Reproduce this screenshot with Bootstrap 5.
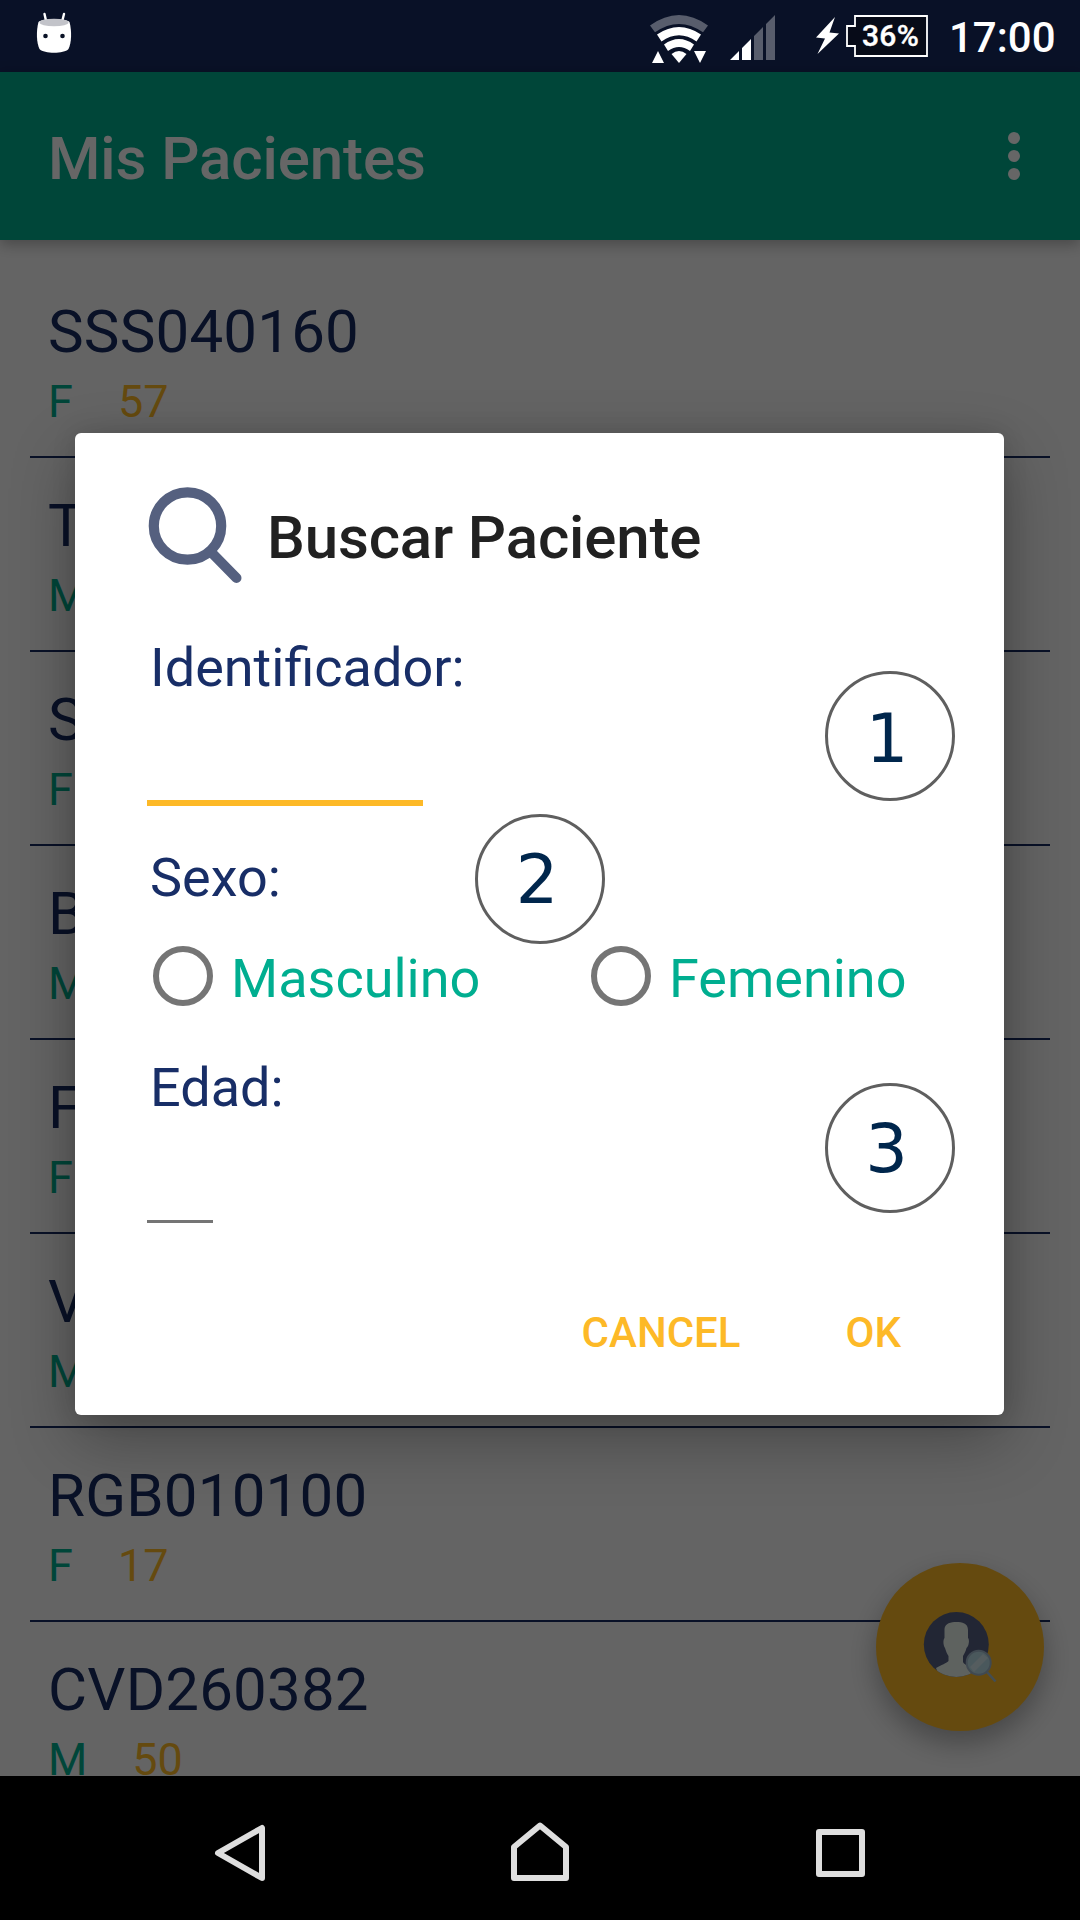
<!DOCTYPE html>
<html lang="es">
<head>
<meta charset="utf-8">
<meta name="viewport" content="width=device-width, initial-scale=1">
<title>Mis Pacientes</title>
<link href="https://cdn.jsdelivr.net/npm/bootstrap@5.3.0/dist/css/bootstrap.min.css" rel="stylesheet">
<style>
  :root { --navy:#182c61; --teal:#00ae90; --amber:#fdb927; }
  body { font-family: Roboto, "Liberation Sans", sans-serif; width:1080px; height:1920px; overflow:hidden; background:#000; }
  svg { display:block; flex:none; }
  .phone { width:1080px; height:1920px; }
  .screen { height:1776px; background:#fafafa; }
  .status { height:72px; background:var(--navy); }
  .status-icons { height:72px; z-index:5; color:#fff; padding:0 24px 0 36px; }
  .signal { margin-left:22px; }
  .bolt { margin-left:41px; }
  .clock { font-size:42px; line-height:48px; font-weight:500; width:107px; margin-left:21px; padding-top:3px; }
  .battery { width:82px; height:42px; margin-left:7px; }
  .battery-text { font-size:30px; line-height:42px; font-weight:500; left:16px; top:0; letter-spacing:.3px; -webkit-text-stroke:.4px #fff; }
  .appbar { height:168px; background:var(--teal); padding:5px 60px 0 48px; box-shadow:0 4px 14px rgba(0,0,0,.3); z-index:1; }
  .appbar h1 { font-size:60px; line-height:70px; font-weight:500; color:#fff; letter-spacing:-.1px; }
  .more { margin-top:-5px; }
  .patients { padding:24px 30px 0; }
  .patient { height:194px; padding:33px 18px 0; border-bottom:2px solid var(--navy); }
  .pid { font-size:60px; line-height:70px; color:var(--navy); letter-spacing:.2px; }
  .meta { font-size:45px; line-height:53px; margin-top:8px; gap:45px; color:var(--teal); }
  .meta .age { color:var(--amber); }
  .fab { left:876px; top:1563px; width:168px; height:168px; background:var(--amber); box-shadow:0 12px 28px rgba(0,0,0,.3); }
  .scrim { background:rgba(0,0,0,.6); padding:433px 76px 0 75px; z-index:3; }
  .dialog { width:929px; height:982px; background:#fff; border-radius:6px; padding:54px 72px 0; box-shadow:0 24px 64px rgba(0,0,0,.3), 0 0 24px rgba(0,0,0,.12); }
  .dialog h2 { font-size:60px; line-height:70px; font-weight:500; color:#212121; padding-top:5px; margin-left:23px; letter-spacing:-.15px; }
  .field-label { font-size:54px; line-height:64px; color:#182e67; padding-left:3px; }
  .lbl-id { margin-top:53px; } .lbl-sex { margin-top:40px; } .lbl-age { margin-top:50px; }
  .line-input { border:0; border-radius:0; padding:0; display:block; background:transparent; }
  .in-id { width:276px; height:106px; border-bottom:6px solid var(--amber); }
  .in-age { width:66px; height:103px; border-bottom:3px solid #757575; }
  .radios { margin-top:36px; padding-left:6px; height:60px; }
  .choice { width:438px; gap:18px; font-size:54px; line-height:60px; color:var(--teal); }
  .choice .txt { padding-top:3px; }
  .ring { width:60px; height:60px; border:6px solid #757575; flex:none; }
  .actions { margin-top:86px; padding-right:31px; gap:105px; }
  .act { font-size:42px; line-height:48px; font-weight:500; color:var(--amber); background:none; border:0; padding:0; }
  .callout { width:130px; height:130px; border:3.5px solid #5f5f5f; background:#fff; font-family:"DejaVu Sans",sans-serif; font-size:67px; line-height:78px; color:#00264c; }
  .c1 { left:750px; top:238px; padding:5px 6px 0 0; }
  .c2 { left:400px; top:381px; padding:1px 6px 0 0; }
  .c3 { left:750px; top:650px; padding:1px 7px 0 0; }
  .navkeys { height:144px; background:#000; padding:8px 214px 0; }
</style>
</head>
<body>
<div class="phone position-relative d-flex flex-column">
  <div class="status-icons position-absolute top-0 start-0 w-100 d-flex align-items-center">
    <svg width="36" height="72" viewBox="36 0 36 72">
      <path d="M44.5 14 46.3 22M64 14 62 22" stroke="#fff" stroke-width="2.4" stroke-linecap="round"/>
      <path d="M38.5 22C42 18 66 18 69.500 22C72 31 71.500 43 68.500 49C64 54 44 54 39.500 49C36.500 43 36 31 38.500 22Z" fill="#fff"/>
      <ellipse cx="54" cy="22.500" rx="14.500" ry="3.800" fill="#c2c3c9"/>
      <circle cx="45.500" cy="36" r="2.300" fill="#091226"/><circle cx="62.500" cy="36" r="2.300" fill="#091226"/>
    </svg>
    <svg class="ms-auto" width="58" height="72" viewBox="650 0 58 72" fill="#fff">
      <path d="M650 25.500Q679 4.500 708 25.500L703 32.300Q679 15.500 655 32.300Z" opacity=".32"/>
      <path d="M657 34.500Q679 19.500 701 34.500L696.500 41.500Q679 29 661.500 41.500Z"/>
      <path d="M664 44.500Q679 33.500 694 44.500L690 51Q679 43 668 51Z"/>
      <path d="M671.500 54Q679 48 686.500 54L679 63Z"/>
      <path d="M652 63 658 51 664 63ZM694 51H706L700 63Z"/>
    </svg>
    <svg class="signal" width="45" height="72" viewBox="730 0 45 72" fill="#fff">
      <path d="M730 60 739 51V60ZM742 60V48L751 39V60Z"/>
      <path d="M754 60V36L763 27V60ZM766 60V24L775 15V60Z" opacity=".32"/>
    </svg>
    <svg class="bolt" width="23" height="72" viewBox="816 0 23 72"><path d="M835 17 816 37.500 825 38.500 817.500 54 839 33.500 829.500 32.500Z" fill="#fff"/></svg>
    <div class="battery position-relative">
      <svg width="82" height="42" viewBox="0 0 82 42"><path d="M9 1H81V41H9V31H1V11H9Z" fill="#070b18" stroke="#fff" stroke-width="1.800"/></svg>
      <span class="battery-text position-absolute">36%</span>
    </div>
    <div class="clock">17:00</div>
  </div>

  <div class="screen position-relative overflow-hidden">
    <div class="status"></div>
    <header class="appbar position-relative d-flex align-items-center justify-content-between">
      <h1 class="m-0">Mis Pacientes</h1>
      <svg class="more" width="12" height="48" viewBox="0 0 12 48" fill="#fff"><circle cx="6" cy="6" r="6"/><circle cx="6" cy="24" r="6"/><circle cx="6" cy="42" r="6"/></svg>
    </header>
    <main class="patients">
      <div class="patient"><div class="pid">SSS040160</div><div class="meta d-flex"><span>F</span><span class="age">57</span></div></div>
      <div class="patient"><div class="pid">T</div><div class="meta d-flex"><span>M</span></div></div>
      <div class="patient"><div class="pid">S</div><div class="meta d-flex"><span>F</span></div></div>
      <div class="patient"><div class="pid">B</div><div class="meta d-flex"><span>M</span></div></div>
      <div class="patient"><div class="pid">F</div><div class="meta d-flex"><span>F</span></div></div>
      <div class="patient"><div class="pid">V</div><div class="meta d-flex"><span>M</span></div></div>
      <div class="patient"><div class="pid">RGB010100</div><div class="meta d-flex"><span>F</span><span class="age">17</span></div></div>
      <div class="patient"><div class="pid">CVD260382</div><div class="meta d-flex"><span>M</span><span class="age">50</span></div></div>
    </main>
    <div class="fab position-absolute rounded-circle">
      <svg width="168" height="168" viewBox="0 0 168 168">
        <defs><clipPath id="face"><circle cx="80.300" cy="81.500" r="32.500"/></clipPath></defs>
        <circle cx="80.300" cy="81.500" r="32.500" fill="#556083"/>
        <path clip-path="url(#face)" d="M68.500 66C69 60 75 59 80.500 59C86 59 92 60 92 67V75C94 77 92.500 84 90.500 85C89.500 89 88 91 87 93V99C88 102 97 105 101 108L96 116H64L60 105C65 102 71 100 72.500 98V93C71 91 70 88 69 85C67 82 67 77 68.500 75Z" fill="#ecf5ee"/>
        <path d="M111 109 119.500 118.500" stroke="#a6c0d0" stroke-width="2.600"/>
        <circle cx="102.700" cy="99.800" r="12" fill="#b8dce6"/>
        <path d="M94 104 107 91 112 95 98 109Z" fill="#d4e8ee"/>
        <circle cx="102.700" cy="99.800" r="12" fill="none" stroke="#a0b6ca" stroke-width="2"/>
      </svg>
    </div>

    <div class="scrim position-absolute top-0 start-0 w-100 h-100">
      <div class="dialog position-relative" role="dialog">
        <div class="d-flex align-items-center">
          <svg width="97" height="96" viewBox="147 487 97 96" fill="none" stroke="#55607f">
            <circle cx="187.500" cy="526" r="33.700" stroke-width="10.200"/>
            <path d="M211 552 236.500 578" stroke-width="10" stroke-linecap="round"/>
          </svg>
          <h2 class="mb-0">Buscar Paciente</h2>
        </div>
        <div class="field-label lbl-id">Identificador:</div>
        <input class="line-input in-id" aria-label="Identificador">
        <div class="field-label lbl-sex">Sexo:</div>
        <div class="radios d-flex">
          <div class="choice d-flex"><span class="ring rounded-circle"></span><span class="txt">Masculino</span></div>
          <div class="choice d-flex w-auto"><span class="ring rounded-circle"></span><span class="txt">Femenino</span></div>
        </div>
        <div class="field-label lbl-age">Edad:</div>
        <input class="line-input in-age" aria-label="Edad">
        <div class="actions d-flex justify-content-end">
          <button class="act">CANCEL</button>
          <button class="act">OK</button>
        </div>
        <div class="callout c1 position-absolute rounded-circle d-flex align-items-center justify-content-center">1</div>
        <div class="callout c2 position-absolute rounded-circle d-flex align-items-center justify-content-center">2</div>
        <div class="callout c3 position-absolute rounded-circle d-flex align-items-center justify-content-center">3</div>
      </div>
    </div>
  </div>

  <nav class="navkeys d-flex align-items-center justify-content-between">
    <svg width="52" height="60" viewBox="214 1822 52 60" fill="none" stroke="#dedede" stroke-width="6" stroke-linejoin="round"><path d="M262 1828V1878L218 1853Z"/></svg>
    <svg width="60" height="60" viewBox="510 1822 60 60" fill="none" stroke="#dedede" stroke-width="6" stroke-linejoin="round"><path d="M514 1878V1847L540 1825.500 566 1847V1878Z"/></svg>
    <svg width="52" height="60" viewBox="814 1822 52 60" fill="none" stroke="#dedede" stroke-width="6" stroke-linejoin="round"><path d="M819 1832H862V1874H819Z"/></svg>
  </nav>
</div>
<script src="https://cdn.jsdelivr.net/npm/bootstrap@5.3.0/dist/js/bootstrap.bundle.min.js"></script>
</body>
</html>
